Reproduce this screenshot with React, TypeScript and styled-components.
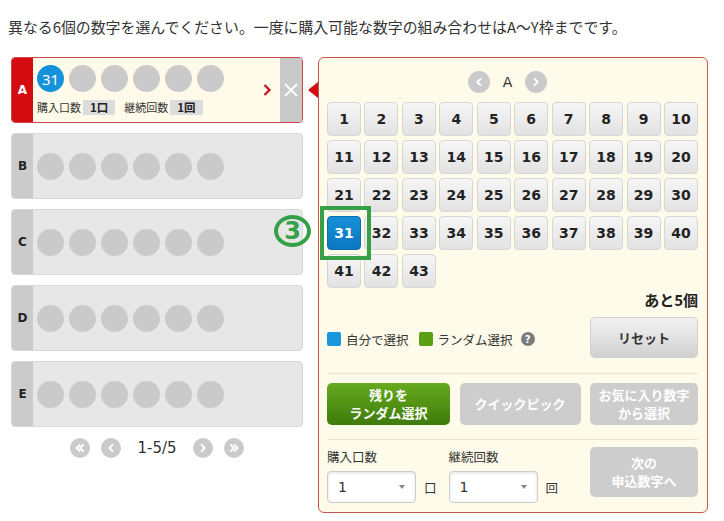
import React from 'react';
import styled, { createGlobalStyle } from 'styled-components';

const GlobalStyle = createGlobalStyle`
    html, body {
        margin: 0;
        padding: 0;
        background: #ffffff;
    }

    body {
        font-family: "Noto Sans CJK JP", "Noto Sans", sans-serif;
        color: #333333;
    }
`;

const Page = styled.div`
    width: 724px;
    height: 521px;
    box-sizing: border-box;
    padding: 17px 0 0 8px;
    overflow: hidden;
`;

const Lead = styled.p`
    margin: 0 0 20px;
    font-size: 14.9px;
    line-height: 20px;
    color: #333333;
    white-space: nowrap;
`;

const Main = styled.div`
    display: flex;
    align-items: flex-start;
    gap: 15px;
    padding-left: 3px;
`;

const LeftColumn = styled.div`
    width: 292px;
    display: flex;
    flex-direction: column;
    gap: 10px;
`;

const Card = styled.div<{ $active?: boolean }>`
    height: 66px;
    box-sizing: border-box;
    display: flex;
    border: 1px solid ${(p) => (p.$active ? '#c8464a' : '#d8d8d8')};
    border-radius: 4px;
    background: ${(p) => (p.$active ? '#fffae9' : '#e7e7e7')};
    overflow: hidden;
`;

const CardLabel = styled.div<{ $active?: boolean }>`
    width: 21px;
    flex: none;
    display: flex;
    align-items: center;
    justify-content: center;
    background: ${(p) => (p.$active ? '#d40c12' : '#cbcbcb')};
    color: ${(p) => (p.$active ? '#ffffff' : '#222222')};
    font-family: "DejaVu Sans", sans-serif;
    font-weight: bold;
    font-size: 12px;
`;

const CardBody = styled.div<{ $active?: boolean }>`
    flex: 1;
    display: flex;
    flex-direction: column;
    justify-content: ${(p) => (p.$active ? 'flex-start' : 'center')};
    padding: ${(p) => (p.$active ? '7px 0 0 4px' : '0 0 0 4px')};
`;

const Balls = styled.div`
    display: flex;
    gap: 5px;
`;

const Ball = styled.div<{ $filled?: boolean }>`
    width: 27px;
    height: 27px;
    border-radius: 50%;
    background: ${(p) => (p.$filled ? '#1592d9' : '#cacaca')};
    color: #ffffff;
    display: flex;
    align-items: center;
    justify-content: center;
    font-family: "Noto Sans", sans-serif;
    font-size: 15px;
`;

const InfoLine = styled.div`
    display: flex;
    align-items: center;
    margin-top: 8px;
    font-size: 11px;
    line-height: 15px;
    color: #333333;
`;

const Tag = styled.span`
    display: inline-block;
    margin: 0 9px 0 2px;
    padding: 0 7px;
    background: #dcdcdc;
    font-weight: bold;
    font-size: 11.5px;
    line-height: 15px;
    color: #222222;
`;

const Chevron = styled.div`
    width: 22px;
    flex: none;
    display: flex;
    align-items: center;
    justify-content: center;
    padding-right: 2px;
`;

const CloseColumn = styled.div`
    width: 22px;
    flex: none;
    background: #c9c9c9;
    display: flex;
    align-items: center;
    justify-content: center;
`;

const Pager = styled.div`
    display: flex;
    align-items: center;
    justify-content: center;
    gap: 11px;
    margin-top: 1px;
`;

const PagerText = styled.span`
    margin: 0 5px;
    font-family: "DejaVu Sans", sans-serif;
    font-size: 15px;
    color: #333333;
`;

const CircleButton = styled.span<{ $size: number }>`
    width: ${(p) => p.$size}px;
    height: ${(p) => p.$size}px;
    border-radius: 50%;
    background: #cacaca;
    display: inline-flex;
    align-items: center;
    justify-content: center;
    flex: none;
`;

const Panel = styled.div`
    position: relative;
    width: 390px;
    box-sizing: border-box;
    border: 1px solid #c8544e;
    border-radius: 6px;
    background: #fffbea;
    padding: 13px 9px 9px 8px;
`;

const Pointer = styled.div`
    position: absolute;
    left: -11px;
    top: 24px;
    width: 0;
    height: 0;
    border-top: 8px solid transparent;
    border-bottom: 8px solid transparent;
    border-right: 10px solid #d40c12;
`;

const PanelNav = styled.div`
    display: flex;
    align-items: center;
    justify-content: center;
    gap: 13px;
    height: 22px;
    padding-right: 10px;
`;

const NavLetter = styled.span`
    font-family: "DejaVu Sans", sans-serif;
    font-size: 14px;
    color: #333333;
`;

const Grid = styled.div`
    display: grid;
    grid-template-columns: repeat(10, 1fr);
    grid-auto-rows: 34px;
    column-gap: 3.4px;
    row-gap: 4px;
    margin-top: 9px;
`;

const NumberCell = styled.div<{ $raised?: boolean }>`
    position: relative;
    z-index: ${(p) => (p.$raised ? 2 : 'auto')};
`;

const NumberButton = styled.div<{ $selected?: boolean }>`
    height: 100%;
    box-sizing: border-box;
    display: flex;
    align-items: center;
    justify-content: center;
    border: 1px solid ${(p) => (p.$selected ? '#0a6fb0' : '#d6d6d6')};
    border-radius: 4px;
    background: ${(p) => (p.$selected
        ? 'linear-gradient(#1590d8, #0b78c0)'
        : 'linear-gradient(#f6f6f6, #e2e2e2)')};
    color: ${(p) => (p.$selected ? '#ffffff' : '#222222')};
    font-family: "DejaVu Sans", sans-serif;
    font-weight: bold;
    font-size: 14px;
`;

const Highlight = styled.div`
    position: absolute;
    left: -7px;
    top: -10px;
    width: 51px;
    height: 54px;
    box-sizing: border-box;
    border: 4px solid #35a047;
    pointer-events: none;
`;

const StepMark = styled.span`
    position: absolute;
    left: -50px;
    top: 5px;
    width: 37px;
    height: 32px;
    box-sizing: border-box;
    border: 4px solid #35a047;
    border-radius: 50%;
    display: flex;
    align-items: center;
    justify-content: center;
    font-family: "DejaVu Sans", sans-serif;
    font-size: 24px;
    line-height: 24px;
    font-weight: bold;
    color: #35a047;
`;

const Remaining = styled.div`
    margin-top: 2px;
    text-align: right;
    font-weight: bold;
    font-size: 15px;
    line-height: 20px;
    color: #222222;
`;

const LegendRow = styled.div`
    display: flex;
    align-items: center;
    justify-content: space-between;
    margin-top: 7px;
`;

const Legend = styled.div`
    display: flex;
    align-items: center;
    font-size: 12.5px;
    color: #333333;
    padding-top: 3px;
`;

const Swatch = styled.span<{ $color: string; $gap?: boolean }>`
    width: 14px;
    height: 14px;
    border-radius: 2px;
    background: ${(p) => p.$color};
    margin-right: 5px;
    margin-left: ${(p) => (p.$gap ? '10px' : '0')};
`;

const Help = styled.span`
    width: 14px;
    height: 14px;
    margin-left: 8px;
    border-radius: 50%;
    background: #7b7b7b;
    color: #ffffff;
    font-family: "DejaVu Sans", sans-serif;
    font-size: 10px;
    font-weight: bold;
    display: inline-flex;
    align-items: center;
    justify-content: center;
`;

const ActionButton = styled.div<{ $variant: 'reset' | 'green' | 'disabled'; $width: number; $height: number }>`
    width: ${(p) => p.$width}px;
    height: ${(p) => p.$height}px;
    flex: none;
    box-sizing: border-box;
    border-radius: 5px;
    display: flex;
    align-items: center;
    justify-content: center;
    text-align: center;
    font-weight: bold;
    font-size: 13px;
    line-height: 18px;
    color: ${(p) => (p.$variant === 'reset' ? '#333333' : '#ffffff')};
    background: ${(p) => {
        if (p.$variant === 'reset') return 'linear-gradient(#f3f3f3, #d0d0d0)';
        if (p.$variant === 'green') return 'linear-gradient(#66aa1e, #3e7b0b)';
        return '#cdcdcd';
    }};
    border: ${(p) => (p.$variant === 'reset' ? '1px solid #d0d0d0' : 'none')};
`;

const Separator = styled.div<{ $top: number }>`
    height: 1px;
    margin-top: ${(p) => p.$top}px;
    background: #ebe3c9;
`;

const ButtonRow = styled.div`
    display: flex;
    gap: 9.5px;
    margin-top: 9px;
`;

const BottomRow = styled.div`
    display: flex;
    justify-content: space-between;
    align-items: flex-start;
    margin-top: 7px;
`;

const Fields = styled.div`
    display: flex;
    gap: 12px;
`;

const Field = styled.div`
    display: flex;
    flex-direction: column;
`;

const FieldLabel = styled.div`
    font-size: 12.5px;
    line-height: 19px;
    color: #333333;
    margin-bottom: 5px;
`;

const FieldRow = styled.div`
    display: flex;
    align-items: center;
`;

const Select = styled.div`
    width: 89px;
    height: 32px;
    box-sizing: border-box;
    border: 1px solid #cccccc;
    border-radius: 4px;
    background: #ffffff;
    box-shadow: inset 0 1px 3px rgba(0, 0, 0, 0.12);
    display: flex;
    align-items: center;
    justify-content: space-between;
    padding: 0 10px 0 10px;
    font-family: "DejaVu Sans", sans-serif;
    font-size: 14px;
    color: #333333;
`;

const Caret = styled.span`
    width: 0;
    height: 0;
    border-left: 3.5px solid transparent;
    border-right: 3.5px solid transparent;
    border-top: 4px solid #888888;
`;

const Unit = styled.span`
    margin-left: 8px;
    font-size: 12.5px;
    color: #333333;
`;

const ArrowIcon: React.FC<{ dir: 'left' | 'right'; double?: boolean; size?: number }> = ({ dir, double, size = 10 }) => {
    const flip = dir === 'left' ? 'scale(-1,1) translate(-10,0)' : undefined;
    return (
        <svg width={size} height={size} viewBox="0 0 10 10">
            <g transform={flip} fill="none" stroke="#ffffff" strokeWidth="1.9" strokeLinecap="round" strokeLinejoin="round">
                {double ? (
                    <>
                        <polyline points="2,2 5,5 2,8" />
                        <polyline points="5.5,2 8.5,5 5.5,8" />
                    </>
                ) : (
                    <polyline points="3.5,1.8 6.7,5 3.5,8.2" />
                )}
            </g>
        </svg>
    );
};

const slots = ['A', 'B', 'C', 'D', 'E'];
const numbers = Array.from({ length: 43 }, (_, i) => i + 1);

const App: React.FC = () => {
    const renderedCards = slots.map((slot) => {
        const active = slot === 'A';
        return (
            <Card $active={active} key={slot}>
                <CardLabel $active={active}>{slot}</CardLabel>
                <CardBody $active={active}>
                    <Balls>
                        {[0, 1, 2, 3, 4, 5].map((i) => (
                            <Ball key={i} $filled={active && i === 0}>
                                {active && i === 0 ? '31' : ''}
                            </Ball>
                        ))}
                    </Balls>
                    {active && (
                        <InfoLine>
                            購入口数<Tag>1口</Tag>継続回数<Tag>1回</Tag>
                        </InfoLine>
                    )}
                </CardBody>
                {active && (
                    <>
                        <Chevron>
                            <svg width="10" height="14" viewBox="0 0 10 14">
                                <polyline points="2.5,2 7.5,7 2.5,12" fill="none" stroke="#c41e24" strokeWidth="2.4" />
                            </svg>
                        </Chevron>
                        <CloseColumn>
                            <svg width="14" height="14" viewBox="0 0 14 14">
                                <path d="M1 1 L13 13 M13 1 L1 13" stroke="#ffffff" strokeWidth="1.8" />
                            </svg>
                        </CloseColumn>
                    </>
                )}
            </Card>
        );
    });

    const renderedNumbers = numbers.map((n) => (
        <NumberCell key={n} $raised={n === 31}>
            <NumberButton $selected={n === 31}>{n}</NumberButton>
            {n === 31 && (
                <Highlight>
                    <StepMark>3</StepMark>
                </Highlight>
            )}
        </NumberCell>
    ));

    return (
        <Page>
            <GlobalStyle />
            <Lead>異なる6個の数字を選んでください。一度に購入可能な数字の組み合わせはA〜Y枠までです。</Lead>
            <Main>
                <LeftColumn>
                    {renderedCards}
                    <Pager>
                        <CircleButton $size={20}><ArrowIcon dir="left" double /></CircleButton>
                        <CircleButton $size={20}><ArrowIcon dir="left" /></CircleButton>
                        <PagerText>1-5/5</PagerText>
                        <CircleButton $size={20}><ArrowIcon dir="right" /></CircleButton>
                        <CircleButton $size={20}><ArrowIcon dir="right" double /></CircleButton>
                    </Pager>
                </LeftColumn>

                <Panel>
                    <Pointer />
                    <PanelNav>
                        <CircleButton $size={22}><ArrowIcon dir="left" /></CircleButton>
                        <NavLetter>A</NavLetter>
                        <CircleButton $size={22}><ArrowIcon dir="right" /></CircleButton>
                    </PanelNav>

                    <Grid>{renderedNumbers}</Grid>

                    <Remaining>あと5個</Remaining>

                    <LegendRow>
                        <Legend>
                            <Swatch $color="#1796dc" />自分で選択
                            <Swatch $color="#5c9f12" $gap />ランダム選択
                            <Help>?</Help>
                        </Legend>
                        <ActionButton $variant="reset" $width={108} $height={41}>リセット</ActionButton>
                    </LegendRow>

                    <Separator $top={15} />

                    <ButtonRow>
                        <ActionButton $variant="green" $width={123} $height={42}>残りを<br />ランダム選択</ActionButton>
                        <ActionButton $variant="disabled" $width={121} $height={42}>クイックピック</ActionButton>
                        <ActionButton $variant="disabled" $width={108} $height={42}>お気に入り数字<br />から選択</ActionButton>
                    </ButtonRow>

                    <Separator $top={14} />

                    <BottomRow>
                        <Fields>
                            <Field>
                                <FieldLabel>購入口数</FieldLabel>
                                <FieldRow>
                                    <Select>1<Caret /></Select>
                                    <Unit>口</Unit>
                                </FieldRow>
                            </Field>
                            <Field>
                                <FieldLabel>継続回数</FieldLabel>
                                <FieldRow>
                                    <Select>1<Caret /></Select>
                                    <Unit>回</Unit>
                                </FieldRow>
                            </Field>
                        </Fields>
                        <ActionButton $variant="disabled" $width={108} $height={50}>次の<br />申込数字へ</ActionButton>
                    </BottomRow>
                </Panel>
            </Main>
        </Page>
    );
};

export default App;
